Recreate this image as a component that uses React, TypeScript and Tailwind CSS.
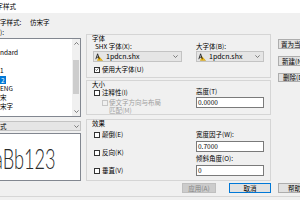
import React from 'react';

function Chevron({ up }: { up?: boolean }) {
  return (
    <svg width="5" height="3" viewBox="0 0 5 3" className="shrink-0">
      <path
        d={up ? 'M0.4 2.6 L2.5 0.5 L4.6 2.6' : 'M0.4 0.4 L2.5 2.5 L4.6 0.4'}
        stroke="#606060"
        strokeWidth="0.8"
        fill="none"
      />
    </svg>
  );
}

function ShxIcon() {
  return (
    <svg width="8" height="8" viewBox="0 0 8 8" className="shrink-0">
      <path d="M4 3.6 L7.6 7.6 L2.4 7.6 Z" fill="#f2b90c" stroke="#b88a00" strokeWidth="0.4" />
      <path d="M0.8 6.2 L2.6 0.8 L4.4 6.2 M1.5 4.2 L3.7 4.2" stroke="#111" strokeWidth="0.8" fill="none" />
    </svg>
  );
}

function Check({ checked, disabled }: { checked?: boolean; disabled?: boolean }) {
  return (
    <span
      className={
        disabled
          ? 'w-[6px] h-[6px] border border-[#c6c6c6] bg-[#f0f0f0] flex items-center justify-center shrink-0'
          : 'w-[6px] h-[6px] border border-[#333333] bg-white flex items-center justify-center shrink-0'
      }
    >
      {checked && (
        <svg width="5" height="5" viewBox="0 0 5 5">
          <path d="M0.6 2.5 L1.9 3.8 L4.4 1" stroke="#222" strokeWidth="0.8" fill="none" />
        </svg>
      )}
    </span>
  );
}

function Combo({ w }: { w: string }) {
  return (
    <div className={`${w} h-[11px] bg-[#e5e5e5] border border-[#c3c3c3] flex items-center pl-[1px] pr-[3px]`}>
      <ShxIcon />
      <span className="ml-[3px] flex-1 leading-none text-[7px] whitespace-nowrap">1pdcn.shx</span>
      <Chevron />
    </div>
  );
}

function Input({ value }: { value: string }) {
  return (
    <div className="w-[68px] h-[11px] bg-white border border-[#7a7a7a] flex items-center pl-[1px] leading-none text-[6.5px]">
      {value}
    </div>
  );
}

const items = ['', 'ndard', '', '1', '2', 'ENG', '宋', '宋字'];

export default function App() {
  return (
    <div className="w-[300px] h-[200px] overflow-hidden bg-[#f0f0f0] text-black text-[6.5px] leading-[7px] font-['Noto_Sans_CJK_SC',sans-serif] flex flex-col">
      <div className="h-[13px] bg-white flex items-center shrink-0 overflow-hidden">
        <span className="ml-[-10px] whitespace-nowrap">文字样式</span>
      </div>

      <div className="flex h-[170px] shrink-0">
        {/* left column */}
        <div className="w-[81px] flex flex-col shrink-0">
          <div className="mt-[5px] h-[8px] flex items-center whitespace-nowrap">
            <span className="w-[30px]">字样式:</span>
            <span>仿宋字</span>
          </div>
          <div className="mt-[2px] h-[8px] flex items-center">):</div>
          <div className="mt-[2px] h-[79px] bg-white border border-[#828790] border-l-0 flex">
            <div className="flex-1 flex flex-col">
              {items.map((t, i) => (
                <div key={i} className="h-[9px] flex items-center whitespace-nowrap">
                  {i === 4 ? (
                    <span className="bg-[#0078d7] text-white px-[1px] leading-[8px]">{t}</span>
                  ) : (
                    <span>{t}</span>
                  )}
                </div>
              ))}
            </div>
            <div className="w-[8px] bg-[#f0f0f0] flex flex-col items-center">
              <div className="h-[9px] flex items-center">
                <Chevron up />
              </div>
              <div className="mt-[12px] w-[6px] h-[34px] bg-[#cdcdcd]" />
              <div className="flex-1" />
              <div className="h-[9px] flex items-center">
                <Chevron />
              </div>
            </div>
          </div>
          <div className="mt-[4px] h-[10px] bg-[#e5e5e5] border border-[#c3c3c3] border-l-0 flex items-center justify-between pr-[1px]">
            <span>式</span>
            <Chevron />
          </div>
          <div className="mt-[2px] h-[48px] bg-white border border-[#828790] border-l-0 flex items-center overflow-hidden">
            <span className="ml-[-6px] mt-[2px] whitespace-nowrap font-['Lato',sans-serif] font-light text-[28px] leading-none text-[#2a2a2a] scale-x-[0.65] origin-left">
              aBb123
            </span>
          </div>
        </div>

        {/* panels */}
        <div className="ml-[5px] w-[185px] flex flex-col shrink-0">
          {/* 字体 */}
          <div className="mt-[21px] h-[44px] border border-[#d5d5d5] flex flex-col">
            <div className="pl-[5px] h-[7px]">字体</div>
            <div className="flex pl-[6px]">
              <div className="w-[89px] flex flex-col">
                <div className="ml-[2px] mt-[1px] h-[7px] whitespace-nowrap">SHX 字体(X):</div>
                <div className="mt-[1px]">
                  <Combo w="w-[89px]" />
                </div>
                <div className="mt-[4px] ml-[1px] h-[7px] flex items-center whitespace-nowrap">
                  <Check checked />
                  <span className="ml-[2px]">使用大字体(U)</span>
                </div>
              </div>
              <div className="ml-[14px] w-[68px] flex flex-col">
                <div className="mt-[1px] h-[7px] whitespace-nowrap">大字体(B):</div>
                <div className="mt-[1px]">
                  <Combo w="w-[68px]" />
                </div>
              </div>
            </div>
          </div>

          {/* 大小 */}
          <div className="mt-[2px] h-[35px] border border-[#d5d5d5] flex flex-col">
            <div className="pl-[5px] h-[7px]">大小</div>
            <div className="flex pl-[7px]">
              <div className="w-[88px] flex flex-col">
                <div className="mt-[1px] h-[7px] flex items-center whitespace-nowrap">
                  <Check />
                  <span className="ml-[2px]">注释性(I)</span>
                </div>
                <div className="mt-[3px] ml-[8px] flex items-start">
                  <span className="mt-[1px]">
                    <Check disabled />
                  </span>
                  <span className="ml-[1px] text-[#a0a0a0] leading-[7.5px] whitespace-nowrap">
                    使文字方向与布局
                    <br />
                    匹配(M)
                  </span>
                </div>
              </div>
              <div className="ml-[14px] w-[68px] flex flex-col">
                <div className="h-[7px] whitespace-nowrap">高度(T)</div>
                <div className="mt-[2px]">
                  <Input value="0.0000" />
                </div>
              </div>
            </div>
          </div>

          {/* 效果 */}
          <div className="mt-[4px] h-[62px] border border-[#d5d5d5] flex flex-col">
            <div className="pl-[5px] h-[7px]">效果</div>
            <div className="flex pl-[7px]">
              <div className="w-[88px] flex flex-col">
                <div className="mt-[4px] h-[7px] flex items-center whitespace-nowrap">
                  <Check />
                  <span className="ml-[2px]">颠倒(E)</span>
                </div>
                <div className="mt-[11px] h-[7px] flex items-center whitespace-nowrap">
                  <Check />
                  <span className="ml-[2px]">反向(K)</span>
                </div>
                <div className="mt-[11px] h-[7px] flex items-center whitespace-nowrap">
                  <Check />
                  <span className="ml-[2px]">垂直(V)</span>
                </div>
              </div>
              <div className="ml-[14px] w-[68px] flex flex-col">
                <div className="mt-[4px] h-[7px] whitespace-nowrap">宽度因子(W):</div>
                <div className="mt-[3px]">
                  <Input value="0.7000" />
                </div>
                <div className="mt-[3px] h-[7px] whitespace-nowrap">倾斜角度(O):</div>
                <div className="mt-[3px]">
                  <Input value="0" />
                </div>
              </div>
            </div>
          </div>
        </div>

        {/* side buttons */}
        <div className="ml-[7px] w-[50px] flex flex-col shrink-0">
          <div className="mt-[26px] h-[10px] bg-[#e1e1e1] border border-[#adadad] flex items-center pl-[2px] whitespace-nowrap">
            置为当前(C)
          </div>
          <div className="mt-[7px] h-[10px] bg-[#e1e1e1] border border-[#adadad] flex items-center pl-[3px] whitespace-nowrap">
            新建(N)...
          </div>
          <div className="mt-[7px] h-[9px] bg-[#e1e1e1] border border-[#adadad] flex items-center pl-[4px] whitespace-nowrap">
            删除(D)
          </div>
        </div>
      </div>

      {/* bottom buttons */}
      <div className="flex h-[10px] shrink-0">
        <div className="ml-[182px] w-[34px] h-[10px] bg-[#cccccc] border border-[#bfbfbf] text-[#838383] flex items-center justify-center whitespace-nowrap shrink-0">
          应用(A)
        </div>
        <div className="ml-[13px] w-[42px] h-[10px] bg-[#e1e1e1] border border-[#0078d7] flex items-center justify-center whitespace-nowrap shrink-0">
          取消
        </div>
        <div className="ml-[7px] w-[42px] h-[10px] bg-[#e1e1e1] border border-[#adadad] flex items-center justify-center whitespace-nowrap shrink-0">
          帮助(H)
        </div>
      </div>
      <div className="mt-[3px] h-[1px] bg-[#d6d6d6] shrink-0" />
    </div>
  );
}
